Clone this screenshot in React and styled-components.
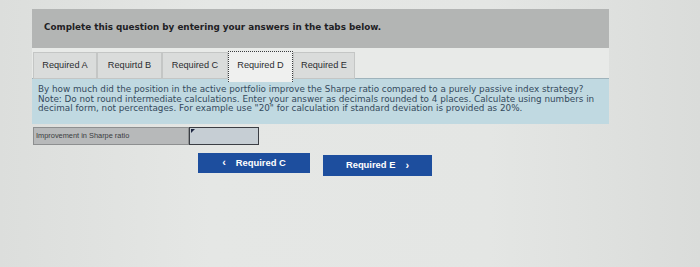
import React from "react";
import styled, { createGlobalStyle } from "styled-components";

const Global = createGlobalStyle`
  html, body { margin: 0; padding: 0; }
  body {
    background: linear-gradient(90deg, #dcdedc 0%, #e5e7e5 30%, #e4e6e4 70%, #dadcda 100%);
    width: 700px;
    height: 267px;
    overflow: hidden;
    font-family: "DejaVu Sans", Verdana, sans-serif;
  }
`;

const Page = styled.div`
  padding: 9px 0 0 32px;
  width: 577px;
`;

const Header = styled.div`
  height: 39px;
  background: #b3b5b4;
  display: flex;
  align-items: center;
  padding-left: 12px;
  font-family: "DejaVu Sans", Verdana, sans-serif;
  font-weight: bold;
  font-size: 8.8px;
  color: #1f2124;
  padding-bottom: 4px;
  box-sizing: border-box;
`;

const Panel = styled.div`
  background: #e8eae8;
  padding-top: 4px;
`;

const TabRow = styled.div`
  display: flex;
  align-items: flex-start;
  height: 26px;
  padding-left: 1px;
`;

const Tab = styled.div`
  width: ${(p) => p.$w}px;
  height: ${(p) => (p.$active ? 31 : 27)}px;
  margin-top: ${(p) => (p.$active ? -1 : 0)}px;
  box-sizing: border-box;
  background: ${(p) => (p.$active ? "#eff0ef" : "#dadcdb")};
  border: ${(p) => (p.$active ? "1px dotted #3a3c3e" : "1px solid #c4c6c5")};
  border-bottom: ${(p) => (p.$active ? "none" : "1px solid #c4c6c5")};
  display: flex;
  align-items: center;
  justify-content: center;
  padding-bottom: ${(p) => (p.$active ? 4 : 1)}px;
  font-family: "Liberation Sans", Arial, sans-serif;
  font-size: 9.2px;
  color: #2a2c2f;
  position: relative;
  z-index: ${(p) => (p.$active ? 2 : 1)};
`;

const Content = styled.div`
  background: #c0d9e1;
  border-top: 1px solid #9fb3bb;
  padding: 6px 10px 10px 6px;
  font-family: "DejaVu Sans", Verdana, sans-serif;
  font-size: 8.8px;
  line-height: 9.5px;
  color: #34495c;
`;

const Line = styled.div`
  white-space: nowrap;
`;

const AnswerRow = styled.div`
  display: flex;
  margin-top: 3px;
  margin-left: 1px;
  height: 18px;
`;

const Label = styled.div`
  width: 156px;
  box-sizing: border-box;
  background: #b7b9ba;
  border: 1px solid #8d8f90;
  display: flex;
  align-items: center;
  padding-left: 2px;
  font-family: "Liberation Sans", Arial, sans-serif;
  font-size: 7.4px;
  color: #3a3c40;
`;

const Input = styled.div`
  width: 70px;
  box-sizing: border-box;
  background: #c6ced4;
  border: 1px solid #3b3e44;
  position: relative;
`;

const Caret = styled.span`
  position: absolute;
  left: 1px;
  top: 1px;
  width: 0;
  height: 0;
  border-top: 4px solid #1c2540;
  border-right: 4px solid transparent;
`;

const ButtonRow = styled.div`
  display: flex;
  gap: 13px;
  margin-top: 8px;
  margin-left: 166px;
  align-items: flex-start;
`;

const NavButton = styled.div`
  width: ${(p) => p.$w}px;
  height: ${(p) => p.$h}px;
  margin-top: ${(p) => p.$top || 0}px;
  background: #1d4e9e;
  color: #ffffff;
  display: flex;
  align-items: center;
  justify-content: center;
  gap: 10px;
  font-family: "Liberation Sans", Arial, sans-serif;
  font-weight: bold;
  font-size: 9.4px;
  padding-bottom: 1px;
  box-sizing: border-box;
`;

const Chevron = styled.span`
  font-size: 11px;
  font-weight: bold;
`;

const tabs = [
  { label: "Required A", w: 64 },
  { label: "Requirtd B", w: 65 },
  { label: "Required C", w: 66 },
  { label: "Required D", w: 65, active: true },
  { label: "Required E", w: 62 },
];

export default function App() {
  return (
    <>
      <Global />
      <Page>
        <Header>Complete this question by entering your answers in the tabs below.</Header>
        <Panel>
          <TabRow>
            {tabs.map((t) => (
              <Tab key={t.label} $w={t.w} $active={t.active}>
                {t.label}
              </Tab>
            ))}
          </TabRow>
          <Content>
            <Line>
              By how much did the position in the active portfolio improve the Sharpe ratio compared to a purely passive index strategy?
            </Line>
            <Line>
              Note: Do not round intermediate calculations. Enter your answer as decimals rounded to 4 places. Calculate using numbers in
            </Line>
            <Line>
              decimal form, not percentages. For example use "20" for calculation if standard deviation is provided as 20%.
            </Line>
          </Content>
        </Panel>
        <AnswerRow>
          <Label>Improvement in Sharpe ratio</Label>
          <Input>
            <Caret />
          </Input>
        </AnswerRow>
        <ButtonRow>
          <NavButton $w={112} $h={20}>
            <Chevron>‹</Chevron>
            <span>Required C</span>
          </NavButton>
          <NavButton $w={109} $h={21} $top={2}>
            <span>Required E</span>
            <Chevron>›</Chevron>
          </NavButton>
        </ButtonRow>
      </Page>
    </>
  );
}
